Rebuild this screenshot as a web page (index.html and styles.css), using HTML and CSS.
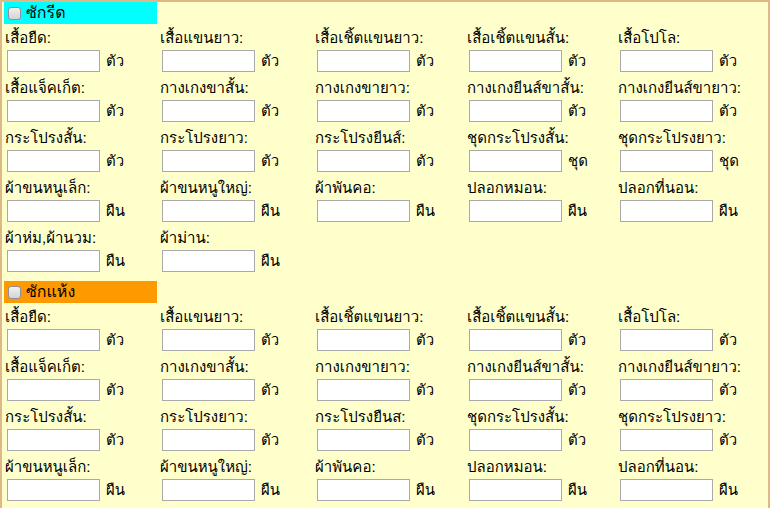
FILE: index.html
```html
<!DOCTYPE html>
<html lang="th">
<head>
    <meta charset="UTF-8">
    <title>รายการซักผ้า</title>
    <link rel="stylesheet" href="styles.css">
</head>
<body>
<div class="panel">

    <!-- ซักรีด -->
    <div class="group">
        <div class="group-head wash"><span class="check"></span>ซักรีด</div>
        <div class="items">
            <div class="item"><label>เสื้อยืด:</label><div class="field"><input type="text"><span>ตัว</span></div></div>
            <div class="item"><label>เสื้อแขนยาว:</label><div class="field"><input type="text"><span>ตัว</span></div></div>
            <div class="item"><label>เสื้อเชิ้ตแขนยาว:</label><div class="field"><input type="text"><span>ตัว</span></div></div>
            <div class="item"><label>เสื้อเชิ้ตแขนสั้น:</label><div class="field"><input type="text"><span>ตัว</span></div></div>
            <div class="item"><label>เสื้อโปโล:</label><div class="field"><input type="text"><span>ตัว</span></div></div>

            <div class="item"><label>เสื้อแจ็คเก็ต:</label><div class="field"><input type="text"><span>ตัว</span></div></div>
            <div class="item"><label>กางเกงขาสั้น:</label><div class="field"><input type="text"><span>ตัว</span></div></div>
            <div class="item"><label>กางเกงขายาว:</label><div class="field"><input type="text"><span>ตัว</span></div></div>
            <div class="item"><label>กางเกงยีนส์ขาสั้น:</label><div class="field"><input type="text"><span>ตัว</span></div></div>
            <div class="item"><label>กางเกงยีนส์ขายาว:</label><div class="field"><input type="text"><span>ตัว</span></div></div>

            <div class="item"><label>กระโปรงสั้น:</label><div class="field"><input type="text"><span>ตัว</span></div></div>
            <div class="item"><label>กระโปรงยาว:</label><div class="field"><input type="text"><span>ตัว</span></div></div>
            <div class="item"><label>กระโปรงยีนส์:</label><div class="field"><input type="text"><span>ตัว</span></div></div>
            <div class="item"><label>ชุดกระโปรงสั้น:</label><div class="field"><input type="text"><span>ชุด</span></div></div>
            <div class="item"><label>ชุดกระโปรงยาว:</label><div class="field"><input type="text"><span>ชุด</span></div></div>

            <div class="item"><label>ผ้าขนหนูเล็ก:</label><div class="field"><input type="text"><span>ผืน</span></div></div>
            <div class="item"><label>ผ้าขนหนูใหญ่:</label><div class="field"><input type="text"><span>ผืน</span></div></div>
            <div class="item"><label>ผ้าพันคอ:</label><div class="field"><input type="text"><span>ผืน</span></div></div>
            <div class="item"><label>ปลอกหมอน:</label><div class="field"><input type="text"><span>ผืน</span></div></div>
            <div class="item"><label>ปลอกที่นอน:</label><div class="field"><input type="text"><span>ผืน</span></div></div>

            <div class="item"><label>ผ้าห่ม,ผ้านวม:</label><div class="field"><input type="text"><span>ผืน</span></div></div>
            <div class="item"><label>ผ้าม่าน:</label><div class="field"><input type="text"><span>ผืน</span></div></div>
        </div>
    </div>

    <!-- ซักแห้ง -->
    <div class="group">
        <div class="group-head dry"><span class="check"></span>ซักแห้ง</div>
        <div class="items">
            <div class="item"><label>เสื้อยืด:</label><div class="field"><input type="text"><span>ตัว</span></div></div>
            <div class="item"><label>เสื้อแขนยาว:</label><div class="field"><input type="text"><span>ตัว</span></div></div>
            <div class="item"><label>เสื้อเชิ้ตแขนยาว:</label><div class="field"><input type="text"><span>ตัว</span></div></div>
            <div class="item"><label>เสื้อเชิ้ตแขนสั้น:</label><div class="field"><input type="text"><span>ตัว</span></div></div>
            <div class="item"><label>เสื้อโปโล:</label><div class="field"><input type="text"><span>ตัว</span></div></div>

            <div class="item"><label>เสื้อแจ็คเก็ต:</label><div class="field"><input type="text"><span>ตัว</span></div></div>
            <div class="item"><label>กางเกงขาสั้น:</label><div class="field"><input type="text"><span>ตัว</span></div></div>
            <div class="item"><label>กางเกงขายาว:</label><div class="field"><input type="text"><span>ตัว</span></div></div>
            <div class="item"><label>กางเกงยีนส์ขาสั้น:</label><div class="field"><input type="text"><span>ตัว</span></div></div>
            <div class="item"><label>กางเกงยีนส์ขายาว:</label><div class="field"><input type="text"><span>ตัว</span></div></div>

            <div class="item"><label>กระโปรงสั้น:</label><div class="field"><input type="text"><span>ตัว</span></div></div>
            <div class="item"><label>กระโปรงยาว:</label><div class="field"><input type="text"><span>ตัว</span></div></div>
            <div class="item"><label>กระโปรงยืนส:</label><div class="field"><input type="text"><span>ตัว</span></div></div>
            <div class="item"><label>ชุดกระโปรงสั้น:</label><div class="field"><input type="text"><span>ตัว</span></div></div>
            <div class="item"><label>ชุดกระโปรงยาว:</label><div class="field"><input type="text"><span>ตัว</span></div></div>

            <div class="item"><label>ผ้าขนหนูเล็ก:</label><div class="field"><input type="text"><span>ผืน</span></div></div>
            <div class="item"><label>ผ้าขนหนูใหญ่:</label><div class="field"><input type="text"><span>ผืน</span></div></div>
            <div class="item"><label>ผ้าพันคอ:</label><div class="field"><input type="text"><span>ผืน</span></div></div>
            <div class="item"><label>ปลอกหมอน:</label><div class="field"><input type="text"><span>ผืน</span></div></div>
            <div class="item"><label>ปลอกที่นอน:</label><div class="field"><input type="text"><span>ผืน</span></div></div>
        </div>
    </div>

</div>
</body>
</html>
```

FILE: styles.css
```css
html, body {
    margin: 0;
    height: 100%;
    background-color: #deb887;
    overflow: hidden;
}
body {
    font-family: Tahoma, Loma, Garuda, "Noto Sans Thai Looped", "Noto Sans Thai", sans-serif;
    font-size: 15px;
    color: #000;
}
.panel {
    margin-left: 2px;
    width: 766px;
    height: 100%;
    background-color: #ffffcc;
}
.group + .group {
    margin-top: 7px;
}
.group-head {
    display: flex;
    align-items: center;
    width: 153px;
    height: 22px;
    margin-top: 2px;
    margin-left: 2px;
    font-size: 16px;
    line-height: 22px;
}
.group-head.wash {
    background-color: #00ffff;
}
.group-head.dry {
    background-color: #ff9900;
}
.check {
    width: 11px;
    height: 11px;
    margin: 0 5px 0 4px;
    border: 1px solid #8f8f9d;
    border-radius: 3px;
    background: linear-gradient(#f0f0f0, #d4d4d4);
}
.items {
    display: grid;
    grid-template-columns: 155px 155px 152px 151px 1fr;
}
.item {
    height: 50px;
    padding-left: 3px;
    padding-top: 4px;
    box-sizing: border-box;
}
.item label {
    display: block;
    height: 20px;
    line-height: 20px;
    white-space: nowrap;
}
.field {
    display: flex;
    align-items: center;
    gap: 6px;
    height: 22px;
    line-height: 22px;
    margin-top: 2px;
    margin-left: 2px;
}
.field input {
    width: 93px;
    height: 22px;
    box-sizing: border-box;
    margin: 0;
    border: 1px solid #a9a9a9;
    background-color: #fff;
}
```
